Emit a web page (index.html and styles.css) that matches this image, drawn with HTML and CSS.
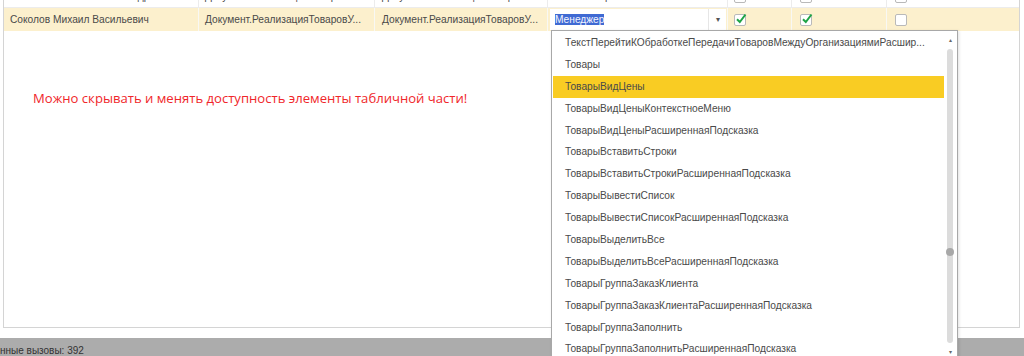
FILE: index.html
```html
<!DOCTYPE html>
<html lang="ru">
<head>
    <meta charset="UTF-8">
    <title>Элементы формы</title>
    <link rel="stylesheet" href="styles.css">
</head>
<body>
    <div class="form-area">
        <div class="grid">
            <div class="row row-prev">
                <div class="cell c1">Казакова Наталья Александровна</div>
                <div class="cell c2">Документ.РеализацияТоваровУ...</div>
                <div class="cell c3">Документ.РеализацияТоваровУ...</div>
                <div class="cell c4 plain">Комментарий</div>
                <div class="cell c5"><span class="check"></span></div>
                <div class="cell c6"><span class="check"></span></div>
                <div class="cell c7"><span class="check"></span></div>
            </div>
            <div class="row row-current">
                <div class="cell c1">Соколов Михаил Васильевич</div>
                <div class="cell c2">Документ.РеализацияТоваровУ...</div>
                <div class="cell c3">Документ.РеализацияТоваровУ...</div>
                <div class="cell c4">
                    <div class="field">
                        <span class="field-text"><span class="selected">Менеджер</span></span>
                        <span class="field-btn">&#9662;</span>
                    </div>
                </div>
                <div class="cell c5"><span class="check on">
                    <svg viewBox="0 0 12 12" width="12" height="12"><path d="M2 6.2 L4.8 9 L10.5 1.5" fill="none" stroke="#1ea446" stroke-width="2"/></svg>
                </span></div>
                <div class="cell c6"><span class="check on">
                    <svg viewBox="0 0 12 12" width="12" height="12"><path d="M2 6.2 L4.8 9 L10.5 1.5" fill="none" stroke="#1ea446" stroke-width="2"/></svg>
                </span></div>
                <div class="cell c7"><span class="check"></span></div>
            </div>

            <p class="note">Можно скрывать и менять доступность элементы табличной части!</p>
        </div>
    </div>

    <div class="status">нные вызовы: 392</div>

    <div class="dropdown">
        <ul class="list">
            <li>ТекстПерейтиКОбработкеПередачиТоваровМеждуОрганизациямиРасшир...</li>
            <li>Товары</li>
            <li class="active">ТоварыВидЦены</li>
            <li>ТоварыВидЦеныКонтекстноеМеню</li>
            <li>ТоварыВидЦеныРасширеннаяПодсказка</li>
            <li>ТоварыВставитьСтроки</li>
            <li>ТоварыВставитьСтрокиРасширеннаяПодсказка</li>
            <li>ТоварыВывестиСписок</li>
            <li>ТоварыВывестиСписокРасширеннаяПодсказка</li>
            <li>ТоварыВыделитьВсе</li>
            <li>ТоварыВыделитьВсеРасширеннаяПодсказка</li>
            <li>ТоварыГруппаЗаказКлиента</li>
            <li>ТоварыГруппаЗаказКлиентаРасширеннаяПодсказка</li>
            <li>ТоварыГруппаЗаполнить</li>
            <li>ТоварыГруппаЗаполнитьРасширеннаяПодсказка</li>
        </ul>
        <div class="scroll">
            <span class="arrow">&#9652;</span>
            <span class="track"><span class="thumb"></span></span>
            <span class="arrow">&#9662;</span>
        </div>
    </div>
</body>
</html>
```

FILE: styles.css
```css
body {
    margin: 0;
    background: #fff;
    font-family: "Liberation Sans", Arial, sans-serif;
    font-size: 10.2px;
    color: #4a4a4a;
    height: 356px;
    overflow: hidden;
}

.form-area {
    height: 338px;
    padding-left: 3px;
    padding-right: 4px;
    box-sizing: border-box;
}

.grid {
    height: 328px;
    border-left: 1px solid #d4d4d4;
    border-right: 1px solid #d4d4d4;
    border-bottom: 1px solid #d4d4d4;
    box-sizing: border-box;
    overflow: hidden;
}

.row {
    display: flex;
    height: 22px;
    border-bottom: 1px solid #ececec;
    box-sizing: border-box;
}

.row-prev {
    margin-top: -14px;
}

.row-current {
    background: #fcf0cd;
    height: 23px;
    border-bottom: none;
}

.cell {
    display: flex;
    align-items: center;
    border-right: 1px solid #ececec;
    box-sizing: border-box;
    white-space: nowrap;
    overflow: hidden;
}

.row-current .cell {
    border-right-color: #f8f8f4;
}

.c1 { width: 195px; padding-left: 6px; }
.c2 { width: 176px; padding-left: 6px; }
.c3 { width: 173px; padding-left: 7px; }
.c4 { width: 180px; padding-left: 10px; }
.c5 { width: 64px; padding-left: 6px; }
.c6 { width: 95px; padding-left: 8px; }
.c7 { flex: 1; padding-left: 8px; border-right: none; }

.row-current .c4 {
    padding: 1px 1px 1px 2px;
}

.field {
    display: flex;
    width: 100%;
    height: 100%;
    background: #fff;
}

.field-text {
    flex: 1;
    display: flex;
    align-items: center;
    padding-left: 5px;
    border-right: 1px solid #e6e6e6;
}

.selected {
    background: #3f6ad3;
    color: #f2f4ff;
}

.field-btn {
    width: 17px;
    text-align: center;
    font-size: 8px;
    color: #555;
    line-height: 21px;
}

.check {
    display: inline-block;
    width: 12px;
    height: 12px;
    border: 1px solid #b9b9b9;
    border-radius: 2px;
    background: #fff;
    box-sizing: border-box;
    position: relative;
}

.check svg {
    position: absolute;
    left: 0;
    top: -2px;
}

.note {
    margin: 58px 0 0 29px;
    font-family: "Open Sans", "Liberation Sans", sans-serif;
    font-size: 13.1px;
    color: #f0262a;
}

.status {
    height: 18px;
    background: #acacac;
    color: #333;
    font-size: 10px;
    line-height: 25px;
}

/* выпадающий список поверх таблицы */
.dropdown {
    position: absolute;
    left: 551px;
    top: 30px;
    width: 407px;
    height: 340px;
    background: #fff;
    border: 1px solid #a8a8a8;
    box-sizing: border-box;
    display: flex;
    box-shadow: 1px 1px 3px rgba(0, 0, 0, 0.12);
}

.list {
    list-style: none;
    margin: 0;
    padding: 1px 0 0 1px;
    flex: 1;
}

.list li {
    height: 21.9px;
    line-height: 21.9px;
    padding-left: 12px;
    white-space: nowrap;
}

.list li.active {
    background: #f9cc23;
}

.scroll {
    width: 12px;
    display: flex;
    flex-direction: column;
    align-items: center;
    padding-right: 1px;
}

.arrow {
    font-size: 6px;
    color: #666;
    height: 18px;
    line-height: 18px;
}

.track {
    width: 6px;
    height: 294px;
    background: #dcdcdc;
    border-radius: 3px;
    position: relative;
}

.thumb {
    position: absolute;
    left: -1px;
    top: 199px;
    width: 8px;
    height: 8px;
    border-radius: 50%;
    background: #a8a8a8;
}
```
